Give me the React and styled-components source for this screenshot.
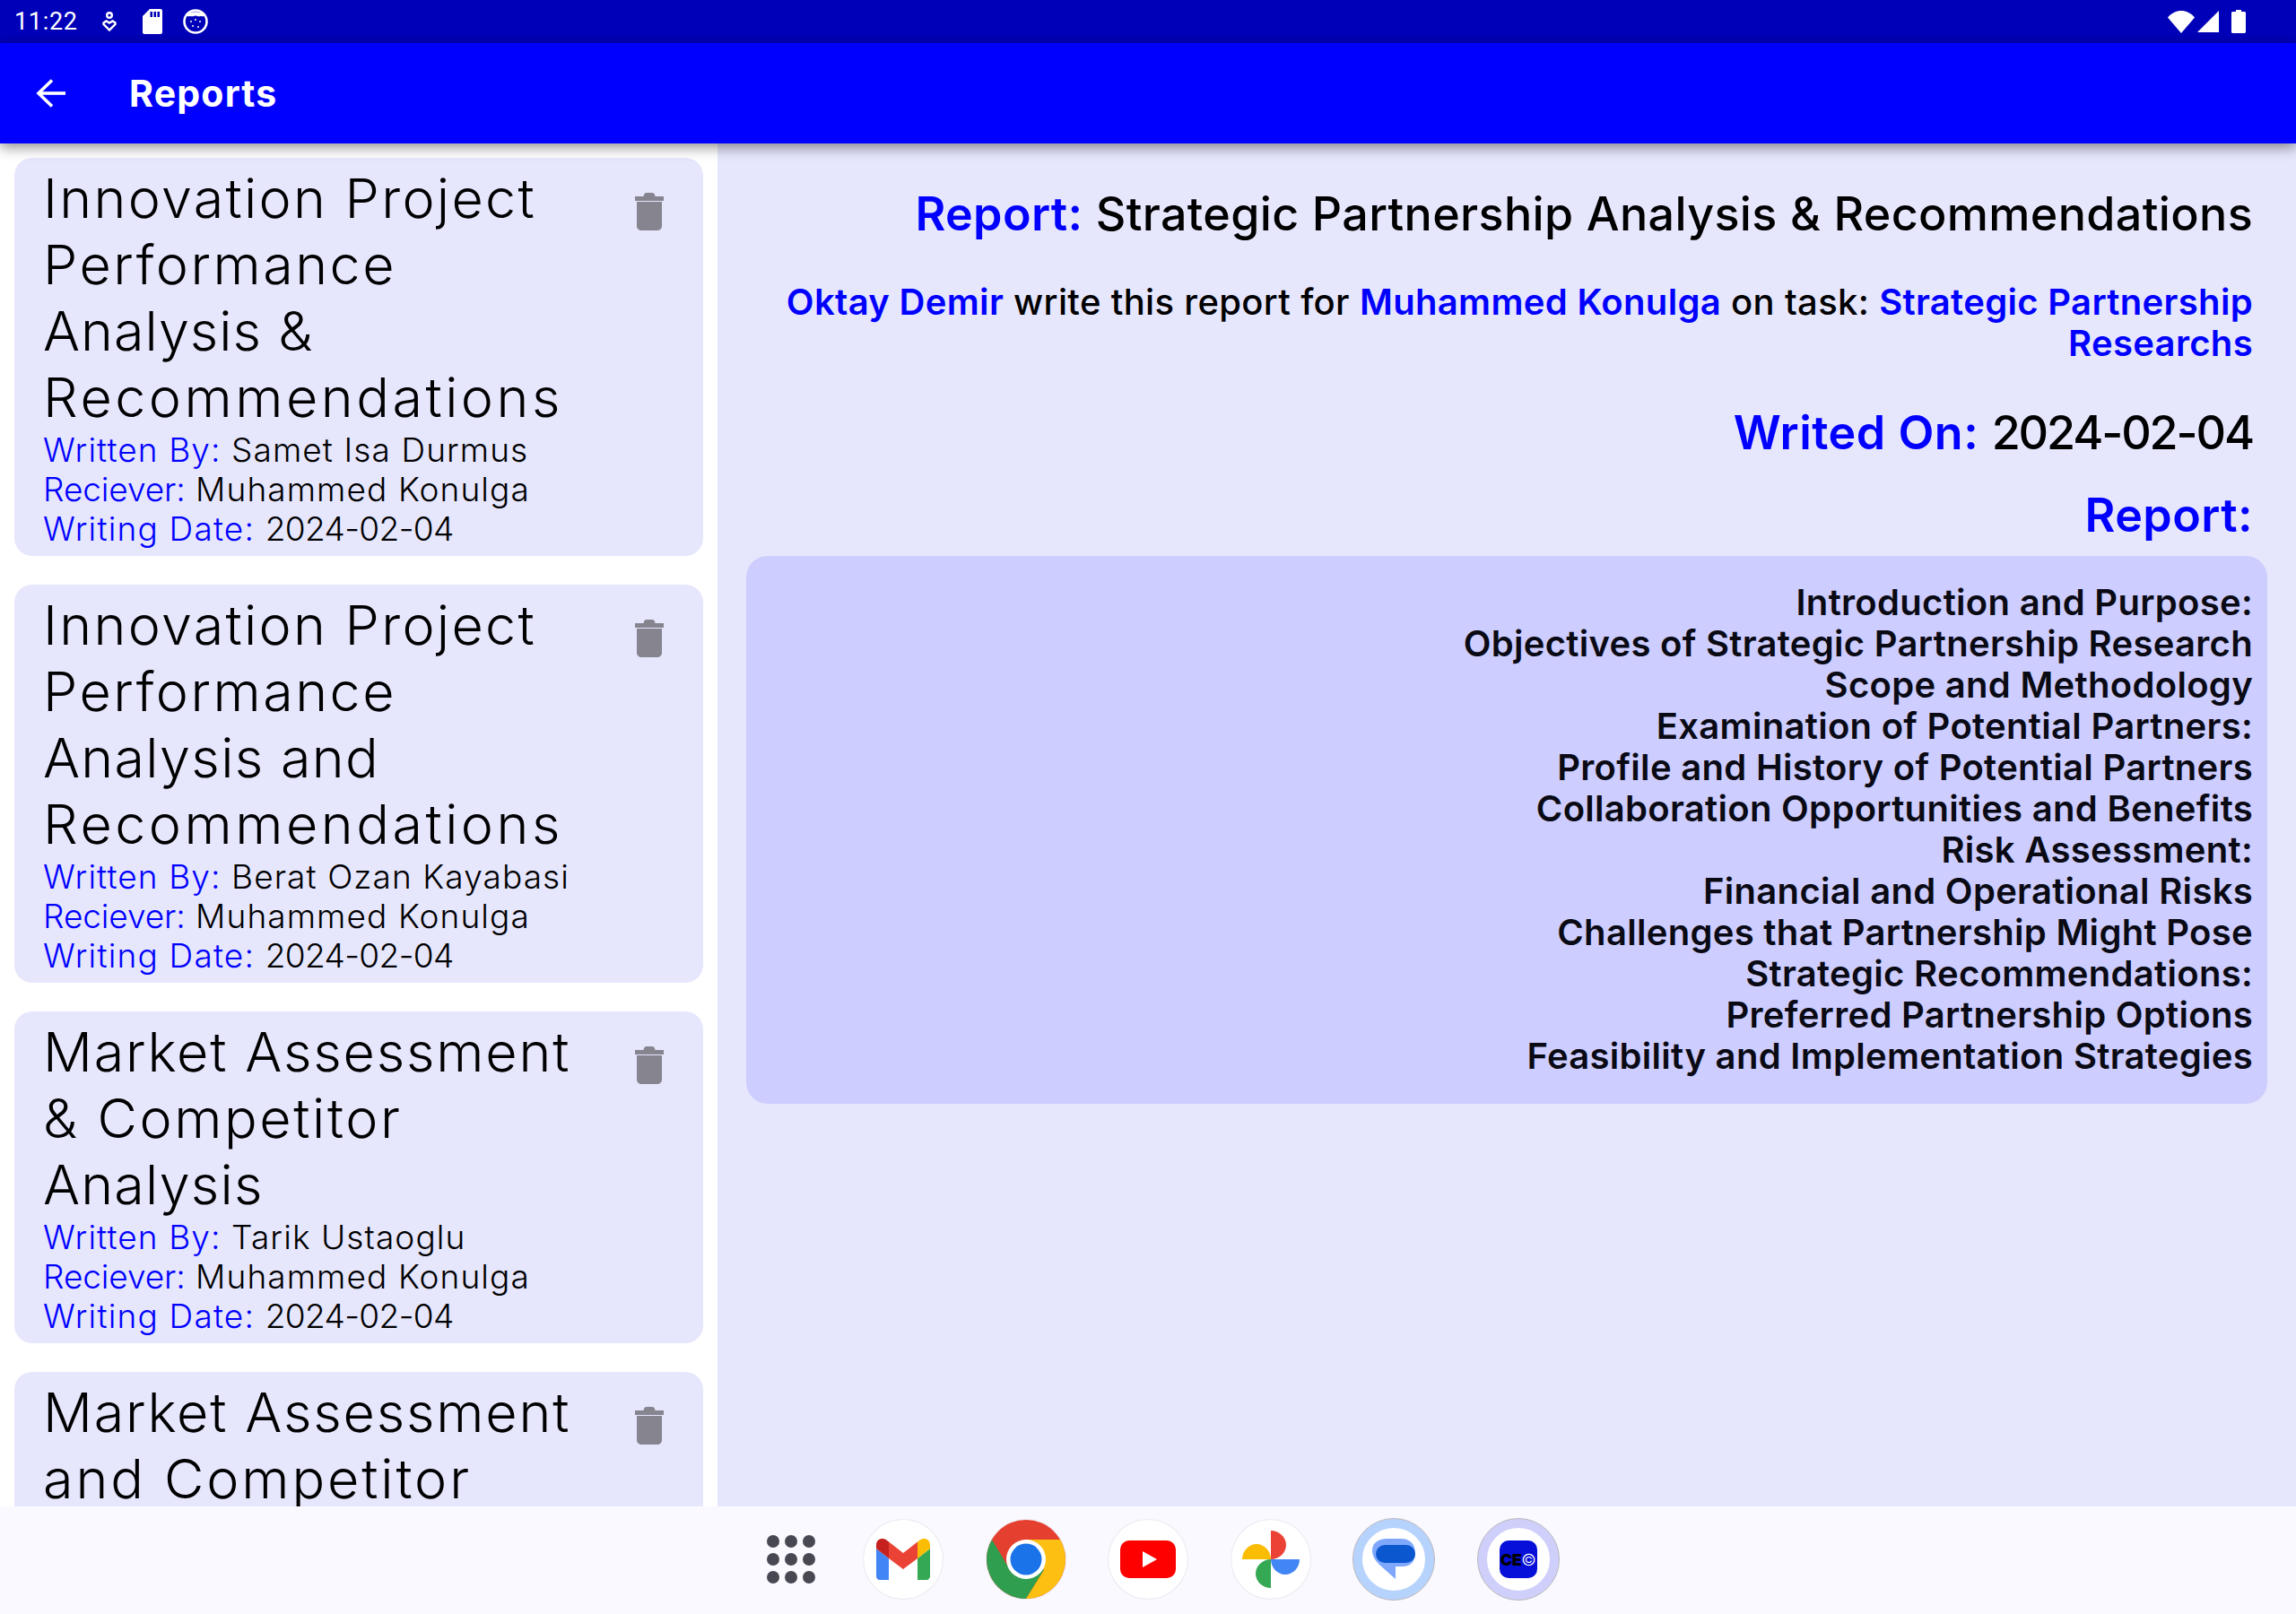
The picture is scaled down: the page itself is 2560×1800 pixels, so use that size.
import React from 'react';
import styled, { createGlobalStyle } from 'styled-components';

const GlobalStyle = createGlobalStyle`
    html, body {
        margin: 0;
        padding: 0;
        background: #fff;
    }
    * {
        box-sizing: border-box;
    }
`;

const Screen = styled.div`
    width: 2560px;
    height: 1800px;
    display: flex;
    flex-direction: column;
    overflow: hidden;
    font-family: "Inter", "Noto Sans", sans-serif;
    background: #fff;
`;

const StatusBar = styled.div`
    height: 48px;
    flex: none;
    display: flex;
    align-items: center;
    padding: 0 56px 0 16px;
    background: #0000b8;
    color: #fff;
`;

const Clock = styled.span`
    width: 98px;
    font-family: "Roboto", sans-serif;
    font-size: 27px;
    letter-spacing: 0.7px;
`;

const StatusGroup = styled.div`
    display: flex;
    align-items: center;
    gap: ${p => p.$gap}px;
    margin-left: ${p => (p.$right ? 'auto' : `${p.$left || 0}px`)};
`;

const AppBar = styled.header`
    height: 112px;
    flex: none;
    display: flex;
    align-items: center;
    padding-left: 40px;
    background: #0000ff;
    color: #fff;
    box-shadow: 0 4px 14px rgba(0, 0, 0, 0.45);
    position: relative;
    z-index: 2;
`;

const AppTitle = styled.h1`
    margin: 0 0 0 71px;
    font-size: 41px;
    font-weight: 700;
    letter-spacing: 1.2px;
`;

const Body = styled.main`
    flex: 1;
    min-height: 0;
    display: flex;
`;

const ListPane = styled.section`
    width: 800px;
    flex: none;
    display: flex;
    flex-direction: column;
    gap: 32px;
    padding: 16px 16px 0;
    overflow: hidden;
`;

const Card = styled.article`
    flex: none;
    display: flex;
    justify-content: space-between;
    padding: 8px 32px;
    border-radius: 20px;
    background: #e6e6fd;
`;

const CardText = styled.div`
    min-width: 0;
`;

const CardTitle = styled.div`
    font-size: 61px;
    line-height: 74px;
    font-weight: 300;
    color: #000;
    letter-spacing: ${p => p.$track}px;
    white-space: nowrap;
`;

const Meta = styled.div`
    font-size: 37px;
    line-height: 44px;
    font-weight: 300;
    color: #000;
    letter-spacing: 1.1px;
    white-space: nowrap;
`;

const MetaLabel = styled.span`
    color: #0000ff;
    letter-spacing: ${p => p.$track ?? 1.1}px;
`;

const MetaDate = styled.span`
    letter-spacing: -0.6px;
`;

const TrashButton = styled.div`
    flex: none;
    margin: 31px 12px 0 0;
    color: #85848f;
`;

const DetailPane = styled.section`
    flex: 1;
    min-width: 0;
    padding: 47px 32px 0;
    background: #e6e6fd;
    text-align: right;
`;

const DetailHeading = styled.div`
    padding-right: 16px;
    font-size: ${p => p.$size}px;
    line-height: ${p => p.$line}px;
    margin-bottom: ${p => p.$after}px;
    letter-spacing: ${p => p.$track}px;
    font-weight: 500;
    color: #000;
`;

const Accent = styled.span`
    color: #0000ff;
    font-weight: 600;
`;

const HeadingDate = styled.span`
    letter-spacing: -2.1px;
`;

const ReportBox = styled.div`
    padding: 29px 16px 30px 32px;
    border-radius: 24px;
    background: #cdcdff;
    font-size: 40px;
    line-height: 46px;
    font-weight: 600;
    letter-spacing: 0.3px;
    color: #0a0a14;
`;

const Dock = styled.nav`
    height: 120px;
    flex: none;
    display: flex;
    align-items: center;
    padding: 0 0 2px 838px;
    background: #faf9ff;
`;

const DockSlot = styled.div`
    width: ${p => (p.$ring ? '90px' : '88px')};
    height: ${p => (p.$ring ? '90px' : '88px')};
    flex: none;
    margin-right: ${p => (p.$plain ? '37px' : '48.5px')};
    display: flex;
    align-items: center;
    justify-content: center;
    border-radius: 50%;
    background: ${p => (p.$plain ? 'transparent' : '#fff')};
    box-shadow: ${p => (p.$plain ? 'none' : '0 0 2px rgba(0, 0, 0, 0.18)')};
    border: ${p => (p.$ring ? `10px solid ${p.$ring}` : 'none')};
    outline: ${p => (p.$ring ? '1px solid #b9b9c2' : 'none')};
`;

const AppsGrid = styled.div`
    display: grid;
    grid-template-columns: repeat(3, 14px);
    grid-auto-rows: 14px;
    gap: 6px;
`;

const AppsDot = styled.span`
    border-radius: 50%;
    background: #484852;
`;

const CeoBadge = styled.div`
    width: 42px;
    height: 42px;
    flex: none;
    display: flex;
    align-items: center;
    justify-content: center;
    border-radius: 10px;
    background: #0610d8;
    font-size: 18px;
    font-weight: 900;
    color: #000;
    letter-spacing: -0.5px;
`;

const CeoMark = styled.span`
    color: #fff;
    font-weight: 300;
`;

const reports = [
    { id: 1, title: ['Innovation Project', 'Performance', 'Analysis &', 'Recommendations'], by: 'Samet Isa Durmus' },
    { id: 2, title: ['Innovation Project', 'Performance', 'Analysis and', 'Recommendations'], by: 'Berat Ozan Kayabasi' },
    { id: 3, title: ['Market Assessment', '& Competitor', 'Analysis'], by: 'Tarik Ustaoglu' },
    { id: 4, title: ['Market Assessment', 'and Competitor', 'Analysis'], by: 'Tarik Ustaoglu' },
];

// Inter runs narrower than the original font on some words
const titleTrack = {
    'Innovation Project': 2.3,
    Performance: 2.5,
    'Analysis &': 1,
    'Analysis and': 1.3,
    Recommendations: 3.5,
    'Market Assessment': 1.8,
    '& Competitor': 2.6,
    'and Competitor': 2.9,
    Analysis: 1.2,
};

const outline = [
    'Introduction and Purpose:',
    'Objectives of Strategic Partnership Research',
    'Scope and Methodology',
    'Examination of Potential Partners:',
    'Profile and History of Potential Partners',
    'Collaboration Opportunities and Benefits',
    'Risk Assessment:',
    'Financial and Operational Risks',
    'Challenges that Partnership Might Pose',
    'Strategic Recommendations:',
    'Preferred Partnership Options',
    'Feasibility and Implementation Strategies',
];

const TrashIcon = () => (
    <svg width="32" height="42" viewBox="0 0 32 42" fill="currentColor">
        <path d="M10 2C10.500 .8 11.500 0 13 0h6c1.500 0 2.500.8 3 2l.5 2H32v5H0V4h9.500z" />
        <path d="M2 10h28v27c0 2.800-2.200 5-5 5H7c-2.800 0-5-2.200-5-5z" />
    </svg>
);

const BackIcon = () => (
    <svg width="33" height="32" viewBox="0 0 33 32" fill="none" stroke="#fff" strokeWidth="3.600">
        <path d="M33 16H3" />
        <path d="M18 1.500 3 16l15 14.500" />
    </svg>
);

const KeyIcon = () => (
    <svg width="16" height="23" viewBox="0 0 16 23" fill="none" stroke="#fff" strokeWidth="2.400">
        <circle cx="8" cy="4" r="2.800" />
        <path d="M1.500 12.500 4.500 10.500 8 12.500 11.500 10.500 14.500 12.500 14.500 14 8 20.500 1.500 14z" />
    </svg>
);

const SdIcon = () => (
    <svg width="22" height="28" viewBox="0 0 22 28" fill="#fff">
        <path fillRule="evenodd" d="M8 0h12c1.100 0 2 .9 2 2v24c0 1.100-.9 2-2 2H2c-1.100 0-2-.9-2-2V8zM8.500 3v6H11V3zM12.500 3v6H15V3zM16.500 3v6H19V3z" />
    </svg>
);

const CatIcon = () => (
    <svg width="28" height="28" viewBox="0 0 28 28">
        <circle cx="14" cy="14" r="12.500" fill="#0000b8" stroke="#fff" strokeWidth="2.600" />
        <path d="M3 6.500C6 2 22 2 25 6.500c-2 3-4 1-5.500 1.500-2 1-3.500-.5-5.500-.5s-3.500 1.500-5.500.5C7 7.500 5 9.500 3 6.500z" fill="#fff" />
        <g fill="#fff">
            <circle cx="9" cy="14" r="1" />
            <circle cx="14" cy="12" r="1" />
            <circle cx="19" cy="14" r="1" />
            <circle cx="11" cy="19" r="1" />
            <circle cx="17" cy="20" r="1" />
        </g>
    </svg>
);

const WifiIcon = () => (
    <svg width="30" height="25" viewBox="0 0 30 25" fill="#fff">
        <path d="M15 25 0 7.500C8-2.500 22-2.500 30 7.500z" />
    </svg>
);

const SignalIcon = () => (
    <svg width="24" height="24" viewBox="0 0 24 24" fill="#fff">
        <path d="M24 0v24H0z" />
    </svg>
);

const BatteryIcon = () => (
    <svg width="16" height="26" viewBox="0 0 16 26" fill="#fff">
        <path d="M5 0h6v2h3.500c.8 0 1.500.7 1.500 1.500V24.500c0 .8-.7 1.500-1.500 1.500h-13C.7 26 0 25.300 0 24.500V3.500C0 2.700.7 2 1.500 2H5z" />
    </svg>
);

const GmailIcon = () => (
    <svg width="60" height="46" viewBox="0 0 60 46">
        <path d="M0 11 14 22V46H4c-2.200 0-4-1.800-4-4z" fill="#4285f4" />
        <path d="M46 22 60 11V42c0 2.200-1.800 4-4 4H46z" fill="#34a853" />
        <path d="M0 11V7C0 .5 7-2 12 2L14 3.500V22z" fill="#c5221f" />
        <path d="M14 3.500 30 16 46 3.500V22L30 34 14 22z" fill="#ea4335" />
        <path d="M46 3.500 48 2C53-2 60 .5 60 7V11L46 22z" fill="#fbbc04" />
    </svg>
);

const ChromeIcon = () => (
    <svg width="88" height="88" viewBox="0 0 88 88">
        <circle cx="44" cy="44" r="44" fill="#e53f30" />
        <path d="M6 22 28 59 44 44 64 56 44 88A44 44 0 0 1 6 22z" fill="#2f9e4f" />
        <path d="M44 22H82A44 44 0 0 1 44 88L64 56z" fill="#fdc012" />
        <circle cx="44" cy="44" r="22" fill="#fff" />
        <circle cx="44" cy="44" r="17.500" fill="#1a73e8" />
    </svg>
);

const YoutubeIcon = () => (
    <svg width="62" height="42" viewBox="0 0 62 42">
        <rect width="62" height="42" rx="10" fill="#ff0000" />
        <path d="M25 12 41 21 25 30z" fill="#fff" />
    </svg>
);

const PhotosIcon = () => (
    <svg width="64" height="64" viewBox="0 0 64 64">
        <path d="M32 32H0c0-9 7-17 16-17s16 8 16 17z" fill="#fbbc04" />
        <path d="M32 32V0c9 0 17 7 17 16s-8 16-17 16z" fill="#ea4335" />
        <path d="M32 32h32c0 9-7 17-16 17s-16-8-16-17z" fill="#4285f4" />
        <path d="M32 32v32c-9 0-17-7-17-16s8-16 17-16z" fill="#34a853" />
    </svg>
);

const MessagesIcon = () => (
    <svg width="48" height="48" viewBox="0 0 48 48">
        <path d="M16 1H32C42 1 48 7 48 17 48 27 42 32 34 32H26V46L8 30C3 25 0 20 0 14 0 6 7 1 16 1z" fill="#7fa8fc" />
        <rect x="4" y="8" width="44" height="20" rx="10" fill="#0b57d0" />
    </svg>
);

export default function App() {
    return (
        <Screen>
            <GlobalStyle />
            <StatusBar>
                <Clock>11:22</Clock>
                <StatusGroup $gap={29}>
                    <KeyIcon />
                    <SdIcon />
                </StatusGroup>
                <StatusGroup $left={23} $gap={0}>
                    <CatIcon />
                </StatusGroup>
                <StatusGroup $right $gap={3}>
                    <WifiIcon />
                    <SignalIcon />
                </StatusGroup>
                <StatusGroup $left={14} $gap={0}>
                    <BatteryIcon />
                </StatusGroup>
            </StatusBar>
            <AppBar>
                <BackIcon />
                <AppTitle>Reports</AppTitle>
            </AppBar>
            <Body>
                <ListPane>
                    {reports.map(r => (
                        <Card key={r.id}>
                            <CardText>
                                {r.title.map(line => <CardTitle key={line} $track={titleTrack[line]}>{line}</CardTitle>)}
                                <Meta><MetaLabel>Written By:</MetaLabel> {r.by}</Meta>
                                <Meta><MetaLabel $track={-0.1}>Reciever:</MetaLabel> Muhammed Konulga</Meta>
                                <Meta><MetaLabel $track={1.2}>Writing Date:</MetaLabel> <MetaDate>2024-02-04</MetaDate></Meta>
                            </CardText>
                            <TrashButton><TrashIcon /></TrashButton>
                        </Card>
                    ))}
                </ListPane>
                <DetailPane>
                    <DetailHeading $size={52} $line={64} $after={43} $track={0.35}>
                        <Accent>Report:</Accent> Strategic Partnership Analysis &amp; Recommendations
                    </DetailHeading>
                    <DetailHeading $size={40} $line={46} $after={45} $track={0.33}>
                        <Accent>Oktay Demir</Accent> write this report for <Accent>Muhammed Konulga</Accent> on task: <Accent>Strategic Partnership</Accent><br />
                        <Accent>Researchs</Accent>
                    </DetailHeading>
                    <DetailHeading $size={52} $line={64} $after={28} $track={0.5}>
                        <Accent>Writed On:</Accent> <HeadingDate>2024-02-04</HeadingDate>
                    </DetailHeading>
                    <DetailHeading $size={52} $line={64} $after={13} $track={0.4}>
                        <Accent>Report:</Accent>
                    </DetailHeading>
                    <ReportBox>
                        {outline.map(line => <div key={line}>{line}</div>)}
                    </ReportBox>
                </DetailPane>
            </Body>
            <Dock>
                <DockSlot $plain>
                    <AppsGrid>
                        {Array.from({ length: 9 }, (_, i) => <AppsDot key={i} />)}
                    </AppsGrid>
                </DockSlot>
                <DockSlot><GmailIcon /></DockSlot>
                <DockSlot><ChromeIcon /></DockSlot>
                <DockSlot><YoutubeIcon /></DockSlot>
                <DockSlot><PhotosIcon /></DockSlot>
                <DockSlot $ring="#b5d3fd"><MessagesIcon /></DockSlot>
                <DockSlot $ring="#cfcffb">
                    <CeoBadge>CE<CeoMark>©</CeoMark></CeoBadge>
                </DockSlot>
            </Dock>
        </Screen>
    );
}
